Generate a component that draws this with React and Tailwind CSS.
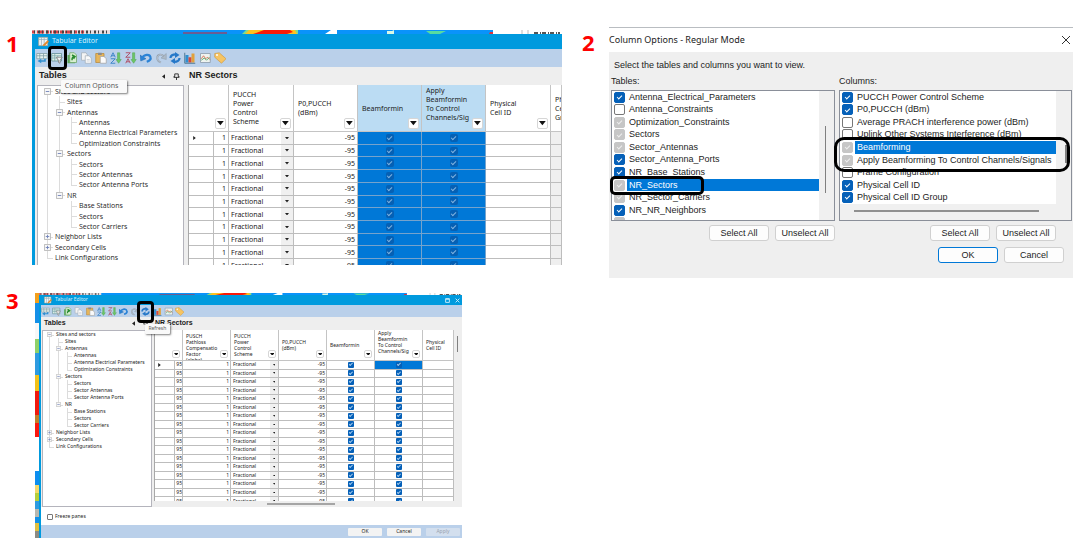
import React, { useState } from "react";

const tree = [
  { label: "Sites and sectors", depth: 0, box: "-", first: true },
  { label: "Sites", depth: 1 },
  { label: "Antennas", depth: 1, box: "-" },
  { label: "Antennas", depth: 2 },
  { label: "Antenna Electrical Parameters", depth: 2 },
  { label: "Optimization Constraints", depth: 2, last: true },
  { label: "Sectors", depth: 1, box: "-" },
  { label: "Sectors", depth: 2 },
  { label: "Sector Antennas", depth: 2 },
  { label: "Sector Antenna Ports", depth: 2, last: true },
  { label: "NR", depth: 1, box: "-", last: true },
  { label: "Base Stations", depth: 2, closed: true },
  { label: "Sectors", depth: 2, closed: true },
  { label: "Sector Carriers", depth: 2, closed: true, last: true },
  { label: "Neighbor Lists", depth: 0, box: "+" },
  { label: "Secondary Cells", depth: 0, box: "+" },
  { label: "Link Configurations", depth: 0, last: true },
];

const tableOptions = [
  { label: "Antenna_Electrical_Parameters", state: "on" },
  { label: "Antenna_Constraints", state: "off" },
  { label: "Optimization_Constraints", state: "mixed" },
  { label: "Sectors", state: "mixed" },
  { label: "Sector_Antennas", state: "mixed" },
  { label: "Sector_Antenna_Ports", state: "on" },
  { label: "NR_Base_Stations", state: "on" },
  { label: "NR_Sectors", state: "mixed", selected: true },
  { label: "NR_Sector_Carriers", state: "mixed" },
  { label: "NR_NR_Neighbors", state: "on" },
  { label: "", state: "mixed" },
];

const columnOptions = [
  { label: "PUCCH Power Control Scheme", state: "on" },
  { label: "P0,PUCCH (dBm)", state: "on" },
  { label: "Average PRACH interference power (dBm)", state: "off" },
  { label: "Uplink Other Systems Interference (dBm)", state: "off" },
  { label: "Beamforming", state: "mixed", selected: true },
  { label: "Apply Beamforming To Control Channels/Signals", state: "mixed" },
  { label: "Frame Configuration", state: "off" },
  { label: "Physical Cell ID", state: "on" },
  { label: "Physical Cell ID Group", state: "on" },
];

const large = {
  border: "border-l-[3px]",
  title: "h-[15px] gap-[3px] pl-[3px] text-[7px]",
  titleIcon: "size-[11px]",
  toolbar: "h-[18px]",
  icons: "ml-px w-[190px]",
  icon: "size-3",
  aside: "w-[149px] pl-0.5",
  heading: "h-[18px] text-[9px]",
  tree: "h-[177px] pl-[3px] font-['Open_Sans'] text-[7px]",
  guide: "w-3",
  guideLine: "left-[6px]",
  box: "size-[7px]",
  main: "ml-1",
  table: "h-[187px] text-[7px]",
  header: "h-[47px] leading-[9px]",
  lines: "pl-1",
  filter: "size-[11px]",
  check: "size-[8px] rounded-[2px]",
  arrow: "w-3",
};

const small = {
  border: "border-l-2",
  title: "h-[10px] gap-[3px] pl-[3px] text-[5px]",
  titleIcon: "size-[8px]",
  toolbar: "h-3",
  icons: "w-[143px]",
  icon: "size-[9px]",
  aside: "w-[111px] pl-px",
  heading: "h-[13px] text-[7px]",
  tree: "h-[119px] pl-0.5 text-[5px]",
  guide: "w-[9px]",
  guideLine: "left-[4px]",
  box: "size-[5px]",
  main: "ml-0.5",
  table: "h-[176px] text-[5px]",
  header: "h-[31px] leading-[6px]",
  lines: "pl-[3px]",
  filter: "size-[8px]",
  check: "size-[6px] rounded-[1px]",
  arrow: "w-[8px]",
};

function Icon({ className, children }) {
  return (
    <svg viewBox="0 0 16 16" className={className} aria-hidden="true">
      {children}
    </svg>
  );
}

const tools = [
  {
    name: "Table",
    art: (
      <>
        <path d="M1 2h14v7H1z" fill="#e8f1ee" stroke="#7d9ba1" />
        <path d="M1 5h14M5 2v7M10 2v7" stroke="#7d9ba1" fill="none" />
        <path d="M13 9v4H7v2l-5-3 5-3v2h4V9z" fill="#2f8fd0" />
      </>
    ),
  },
  {
    name: "Column Options",
    art: (
      <>
        <path d="M1 2h13v10H1z" fill="#dff0e8" stroke="#5c8992" />
        <path d="M1 5h13M5 2v10M9 5v7M1 8h8" stroke="#78a7ac" fill="none" />
        <path d="M7 7h8l-3 4v4l-2-1v-3z" fill="#f5f5f5" stroke="#777" />
      </>
    ),
  },
  {
    name: "Export",
    art: (
      <>
        <path d="M2 4h10v11H2z" fill="#5aa85a" />
        <path d="M5 1h6l3 3v10H5z" fill="#d9efd2" stroke="#6aa465" />
        <path d="M8 11c0-4 1-5 3-5M8 4l4 2-2 3" stroke="#278a30" strokeWidth="2" fill="none" />
      </>
    ),
  },
  {
    name: "Copy",
    art: (
      <>
        <path d="M2 1h6l2 3v7H2z" fill="#f4f4f4" stroke="#a3adb8" />
        <path d="M7 5h5l3 3v7H7z" fill="#fafafa" stroke="#a3adb8" />
        <path d="M9 10h4M9 12h4" stroke="#c3cad2" />
      </>
    ),
  },
  {
    name: "Paste",
    art: (
      <>
        <path d="M1 2h11v12H1z" fill="#e7b65b" stroke="#b98a3a" />
        <path d="M4 1h5v3H4z" fill="#8b8b8b" />
        <path d="M7 6h5l3 3v6H7z" fill="#fbfbfb" stroke="#a3a3a3" />
      </>
    ),
  },
  {
    name: "Sort ascending",
    art: (
      <>
        <path d="M1 7l3-6 3 6M2 5h4" stroke="#3f86c8" strokeWidth="1.3" fill="none" />
        <path d="M1 9h6l-6 6h6" stroke="#3f86c8" strokeWidth="1.3" fill="none" />
        <path d="M10 1h3v9h2l-3.5 5L8 10h2z" fill="#6cc566" stroke="#4aa04d" strokeWidth=".6" />
      </>
    ),
  },
  {
    name: "Sort descending",
    art: (
      <>
        <path d="M1 1h6L1 7h6" stroke="#b0526a" strokeWidth="1.3" fill="none" />
        <path d="M1 15l3-6 3 6M2 13h4" stroke="#b0526a" strokeWidth="1.3" fill="none" />
        <path d="M10 1h3v9h2l-3.5 5L8 10h2z" fill="#6cc566" stroke="#4aa04d" strokeWidth=".6" />
      </>
    ),
  },
  {
    name: "Undo",
    art: (
      <>
        <path d="M0 4l1 8 7-3z" fill="#2b83d6" stroke="#1c62a8" strokeWidth=".6" />
        <path d="M3 8c2-5 10-6 11-1 1 3-2 5-5 6" fill="none" stroke="#2b83d6" strokeWidth="3" />
      </>
    ),
  },
  {
    name: "Redo",
    art: (
      <>
        <path d="M15 2v8l-7-2z" fill="#aebac6" stroke="#8794a3" strokeWidth=".6" />
        <path d="M12 6C9 2 3 3 3 8c0 3 2 5 5 6" fill="none" stroke="#8f9dac" strokeWidth="2.4" />
        <path d="M12 6C9 2 3 3 3 8c0 3 2 5 5 6" fill="none" stroke="#c5ced8" strokeWidth="1" />
      </>
    ),
  },
  {
    name: "Refresh",
    art: (
      <>
        <path d="M2 8c0-3 3-5 7-5" fill="none" stroke="#2678c8" strokeWidth="3" />
        <path d="M8 0l6 4-6 4z" fill="#2678c8" />
        <path d="M14 8c0 3-3 5-7 5" fill="none" stroke="#2678c8" strokeWidth="3" />
        <path d="M8 8v8l-6-4z" fill="#2678c8" />
      </>
    ),
  },
  {
    name: "Chart",
    art: (
      <>
        <path d="M2 4h4v10H2z" fill="#2f8fd0" />
        <path d="M6 7h4v7H6z" fill="#d8483a" />
        <path d="M10 2h4v12h-4z" fill="#e2a13a" />
        <path d="M1 1v14h14" stroke="#2b5d78" fill="none" />
      </>
    ),
  },
  {
    name: "Graph",
    art: (
      <>
        <path d="M2 2h13v12H2z" fill="#eef3f0" stroke="#8795a5" />
        <path d="M3 9l3-4 3 4 2-2 4 3" stroke="#d0562f" fill="none" />
        <path d="M3 11l4-3 3 3 4-4" stroke="#3c9a52" fill="none" />
      </>
    ),
  },
  {
    name: "Label",
    art: (
      <>
        <path d="M1 2l6-1 9 8-6 6-9-8z" fill="#f6c463" stroke="#cf9536" strokeWidth=".8" />
        <circle cx="4" cy="4" r="1.3" fill="#fff" />
      </>
    ),
  },
];

function Tick({ label, className, checked = true }) {
  return (
    <input
      type="checkbox"
      defaultChecked={checked}
      aria-label={label}
      className={`relative block shrink-0 appearance-none after:absolute after:left-[20%] after:top-[25%] after:h-[35%] after:w-[60%] after:-rotate-45 after:border-b after:border-l ${className}`}
    />
  );
}

function TreeRow({ node, s }) {
  const guides = [];
  if (node.depth > 0) guides.push(true);
  if (node.depth > 1) guides.push(!node.closed);
  return (
    <li className="flex items-stretch">
      {guides.map((shown, i) => (
        <span key={i} className={`relative shrink-0 ${s.guide}`}>
          {shown && (
            <span className={`absolute inset-y-0 border-l border-[#dcdcdc] ${s.guideLine}`} />
          )}
        </span>
      ))}
      <span className={`relative flex shrink-0 items-center justify-center ${s.guide}`}>
        <span
          className={`absolute border-l border-[#dcdcdc] ${s.guideLine} ${
            node.first ? "top-1/2" : "top-0"
          } ${node.last ? "bottom-1/2" : "bottom-0"}`}
        />
        <span className={`absolute right-0 top-1/2 border-t border-[#dcdcdc] ${s.guideLine}`} />
        {node.box && (
          <Icon className={`relative ${s.box}`}>
            <path d="M1 1h14v14H1z" fill="#f7f7f7" stroke="#b5b5b5" strokeWidth="2" />
            <path d="M4 8h8" stroke="#6e80b8" strokeWidth="2" />
            {node.box === "+" && <path d="M8 4v8" stroke="#6e80b8" strokeWidth="2" />}
          </Icon>
        )}
      </span>
      <span className="flex items-center whitespace-nowrap pl-0.5 leading-none">{node.label}</span>
    </li>
  );
}

function HeaderCell({ s, lines, filter = true, tint = "", clip = "", span }) {
  return (
    <th
      colSpan={span}
      className={`relative overflow-hidden border-b border-r border-[#c4c4c4] p-0 text-left align-middle font-normal ${s.header} ${tint}`}
    >
      <span className={`block whitespace-nowrap ${s.lines} ${clip}`}>
        {lines.map((line, i) => (
          <span key={i} className="block">
            {line || "\u00a0"}
          </span>
        ))}
      </span>
      {filter && (
        <button
          type="button"
          aria-label={`Filter ${lines.join(" ")}`}
          className={`absolute bottom-0.5 right-0.5 flex items-center justify-center rounded-[2px] border border-[#d6d6d6] bg-white ${s.filter}`}
        >
          <svg viewBox="0 0 8 5" className="w-3/4" aria-hidden="true">
            <path d="M0 0h8L4 5z" fill="#111" />
          </svg>
        </button>
      )}
    </th>
  );
}

function SchemeCell({ s, row }) {
  return (
    <td className="border-b border-r border-[#bdbdbd] p-0">
      <div className="flex h-full items-stretch">
        <select
          aria-label={`PUCCH power control scheme, row ${row}`}
          className="min-w-0 flex-1 appearance-none bg-transparent pl-0.5 leading-none"
        >
          <option>Fractional</option>
        </select>
        <span className={`flex items-center justify-center bg-[#f0f0f0] ${s.arrow}`}>
          <svg viewBox="0 0 8 5" className="w-1/3" aria-hidden="true">
            <path d="M0 0h8L4 5z" fill="#222" />
          </svg>
        </span>
      </div>
    </td>
  );
}

const cell = "border-b border-r border-[#bdbdbd] p-0 leading-none";

function LargeGrid() {
  const s = large;
  const rows = Array.from({ length: 11 }, (_, i) => i + 1);
  return (
    <table className={`w-full table-fixed border-separate border-spacing-0 border-l border-[#a8a8a8] bg-white ${s.table}`}>
      <colgroup>
        <col className="w-[25px]" />
        <col className="w-[15px]" />
        <col className="w-[65px]" />
        <col className="w-[64px]" />
        <col className="w-[64px]" />
        <col className="w-[64px]" />
        <col className="w-[65px]" />
        <col />
      </colgroup>
      <thead>
        <tr>
          <HeaderCell s={s} lines={[]} span={2} />
          <HeaderCell s={s} lines={["PUCCH", "Power", "Control", "Scheme"]} />
          <HeaderCell s={s} lines={["P0,PUCCH", "(dBm)"]} />
          <HeaderCell s={s} lines={["Beamformin"]} tint="bg-[#bbdcf3]" />
          <HeaderCell
            s={s}
            lines={["Apply", "Beamformin", "To Control", "Channels/Sig", ""]}
            tint="bg-[#bbdcf3]"
          />
          <HeaderCell s={s} lines={["Physical", "Cell ID"]} />
          <HeaderCell s={s} lines={["Physical", "Cell ID", "Group"]} filter={false} />
        </tr>
      </thead>
      <tbody>
        {rows.map((row) => (
          <tr key={row}>
            <td className={`${cell} pl-1`}>{row === 1 ? <Pointer /> : null}</td>
            <td className={`${cell} pr-0.5 text-right`}>1</td>
            <SchemeCell s={s} row={row} />
            <td className={`${cell} pr-0.5 text-right`}>-95</td>
            {["Beamforming", "Apply beamforming"].map((name) => (
              <td key={name} className="border-b border-r border-[#75a3cc] bg-[#0078d7] p-0">
                <Tick
                  label={`${name}, row ${row}`}
                  className={`mx-auto bg-[#0560b4] after:border-[#7fb2e0] ${s.check}`}
                />
              </td>
            ))}
            <td className={cell} />
            <td className={`${cell} bg-[#efefef]`} />
          </tr>
        ))}
      </tbody>
    </table>
  );
}

function SmallGrid() {
  const s = small;
  const rows = Array.from({ length: 17 }, (_, i) => i + 1);
  return (
    <table className={`w-full table-fixed border-separate border-spacing-0 border-l border-[#a8a8a8] bg-white ${s.table}`}>
      <colgroup>
        <col className="w-5" />
        <col className="w-[8px]" />
        <col className="w-12" />
        <col className="w-12" />
        <col className="w-12" />
        <col className="w-12" />
        <col className="w-12" />
        <col />
      </colgroup>
      <thead>
        <tr>
          <HeaderCell s={s} lines={[]} span={2} />
          <HeaderCell
            s={s}
            lines={["PUSCH", "Pathloss", "Compensatio", "Factor", "(alpha)"]}
            clip="max-h-6"
          />
          <HeaderCell s={s} lines={["PUCCH", "Power", "Control", "Scheme"]} />
          <HeaderCell s={s} lines={["P0,PUCCH", "(dBm)"]} />
          <HeaderCell s={s} lines={["Beamformin"]} />
          <HeaderCell s={s} lines={["Apply", "Beamformin", "To Control", "Channels/Sig", ""]} />
          <HeaderCell s={s} lines={["Physical", "Cell ID"]} filter={false} />
        </tr>
      </thead>
      <tbody>
        {rows.map((row) => (
          <tr key={row}>
            <td className={`${cell} pl-[3px]`}>{row === 1 ? <Pointer /> : null}</td>
            <td className={`${cell} text-right`}>95</td>
            <td className={`${cell} pr-px text-right`}>1</td>
            <SchemeCell s={s} row={row} />
            <td className={`${cell} pr-px text-right`}>-95</td>
            <td className={cell}>
              <Tick
                label={`Beamforming, row ${row}`}
                className={`mx-auto bg-[#0560b8] after:border-[#9cc4ea] ${s.check}`}
              />
            </td>
            <td className={`${cell} ${row === 1 ? "bg-[#0078d7]" : ""}`}>
              <Tick
                label={`Apply beamforming, row ${row}`}
                className={`mx-auto bg-[#0560b8] after:border-[#9cc4ea] ${s.check}`}
              />
            </td>
            <td className={cell} />
          </tr>
        ))}
      </tbody>
    </table>
  );
}

function Pointer() {
  return (
    <svg viewBox="0 0 4 6" className="h-1 w-[3px]" aria-hidden="true">
      <path d="M0 0l4 3-4 3z" fill="#222" />
    </svg>
  );
}

function EditorWindow({ s, controls, grid, footer, activeTool, tip }) {
  return (
    <div className={`flex flex-1 flex-col border-[#009ade] bg-white text-[#1c1c1c] ${s.border}`}>
      <div className={`flex shrink-0 items-center bg-[#009ade] text-[#d9f0fb] ${s.title}`}>
        <Icon className={s.titleIcon}>
          <path d="M1 2h13v12H1z" fill="#eef4f6" stroke="#b5a48a" />
          <path d="M1 5h13M5 2v12M9 2v12" stroke="#8fa8b4" />
          <path d="M14 6l2 2-6 6-3 1 1-3z" fill="#e38a2e" />
        </Icon>
        <span className="flex-1">Tabular Editor</span>
        {controls && (
          <span className="flex gap-[5px] pr-0.5">
            <button type="button" aria-label="Maximize">
              <svg viewBox="0 0 8 8" className="size-[5px]">
                <path d="M1 1h6v6H1zM1 2h6" fill="none" stroke="#c9ecfb" strokeWidth="1.500" />
              </svg>
            </button>
            <button type="button" aria-label="Close">
              <svg viewBox="0 0 8 8" className="size-[5px]">
                <path d="M1 1l6 6M7 1L1 7" stroke="#c9ecfb" strokeWidth="1.500" />
              </svg>
            </button>
          </span>
        )}
      </div>
      <div className={`flex shrink-0 items-center bg-[#bad0ea] ${s.toolbar}`}>
        <div className={`flex justify-between ${s.icons}`}>
          {tools.map((tool) => (
            <button key={tool.name} type="button" aria-label={tool.name} className="relative">
              <Icon className={s.icon}>{tool.art}</Icon>
              {tool.name === activeTool && tip}
            </button>
          ))}
        </div>
      </div>
      <div className="flex min-h-0 flex-1 bg-[#eeeeee]">
        <aside className={`flex shrink-0 flex-col ${s.aside}`}>
          <div className={`flex shrink-0 items-center gap-2 pl-0.5 pr-1 font-['Liberation_Sans'] font-bold ${s.heading}`}>
            <h2 className="flex-1">Tables</h2>
            <svg viewBox="0 0 4 6" className="h-[5px] w-[3px]" aria-hidden="true">
              <path d="M4 0L0 3l4 3z" fill="#222" />
            </svg>
            <svg viewBox="0 0 8 8" className={s.box} aria-hidden="true">
              <path d="M2 1h4v3h1v1H1V4h1zM4 5v3" fill="none" stroke="#222" />
            </svg>
          </div>
          <div className="min-h-0 flex-1 overflow-hidden border border-[#b4b4bc] bg-white">
            <ul className={`grid auto-rows-fr ${s.tree}`}>
              {tree.map((node, i) => (
                <TreeRow key={i} node={node} s={s} />
              ))}
            </ul>
          </div>
        </aside>
        <main className={`flex min-w-0 flex-1 flex-col ${s.main}`}>
          <h2 className={`flex shrink-0 items-center pl-px font-['Liberation_Sans'] font-bold ${s.heading}`}>
            NR Sectors
          </h2>
          {grid}
        </main>
      </div>
      {footer}
    </div>
  );
}

function ToolMark({ className, tip, tipClass }) {
  return (
    <>
      <span className={`absolute z-10 border-black ${className}`} />
      <span
        role="tooltip"
        className={`absolute flex items-center whitespace-nowrap rounded-[1px] bg-[#f9f9f9] text-[#5e5e5e] shadow-[1px_1px_2px_rgba(0,0,0,0.5)] ${tipClass}`}
      >
        {tip}
      </span>
    </>
  );
}

function MapTop({ className }) {
  return (
    <svg viewBox="0 0 530 4" preserveAspectRatio="none" className={`w-full shrink-0 ${className}`} aria-hidden="true">
      <path d="M0 0h530v4H0z" fill="#0a93fa" />
      <path d="M0 0h78v4H0z" fill="#e6dde0" />
      <path d="M0 2h52" stroke="#d8434a" strokeWidth="3" strokeDasharray="3 2 1 1 5 2" />
      <path d="M2 2h76" stroke="#444" strokeWidth="3" strokeDasharray="1 3 2 2" />
      <path d="M151 3h44" stroke="#8d4a70" strokeWidth="1.5" />
      <path d="M210 4l4-4h52v4z" fill="#7fdc8c" />
      <path d="M213 4l4-4h46l2 4z" fill="#ffc21f" />
      <path d="M232 0h26l3 2-6 2h-34z" fill="#fb1a08" />
      <path d="M293 4l6-4h6v4z" fill="#fff" />
      <path d="M355 4V1h5l2-1v4z" fill="#d9f7e6" />
      <path d="M394 1h20l-6 3h-10z" fill="#58dba0" />
      <path d="M458 2h3v2h-4z" fill="#e0303a" />
      <path d="M461 0h69v4h-69z" fill="#fff" />
      <path d="M490 0v4M496 0v4" stroke="#bbb" />
      <path d="M502 3h26" stroke="#555" strokeWidth="2" strokeDasharray="4 2 1 1" />
    </svg>
  );
}

function MapSide() {
  const bands = [
    [0, 10, "#f4a01c"],
    [10, 20, "#1590e8"],
    [30, 16, "#f7f7f7"],
    [46, 14, "#8fd16a"],
    [60, 22, "#2f9be0"],
    [82, 16, "#f2c21b"],
    [98, 24, "#f01c10"],
    [122, 8, "#c2802a"],
    [130, 14, "#fa1a10"],
    [144, 34, "#fff"],
    [178, 14, "#0d8ef0"],
    [192, 8, "#f3d96a"],
    [200, 8, "#b5cf3c"],
    [208, 8, "#2f9be0"],
    [216, 8, "#b8b8b0"],
    [224, 6, "#1590e8"],
    [230, 8, "#e0c040"],
    [238, 7, "#8c8c84"],
  ];
  return (
    <svg viewBox="0 0 4 245" preserveAspectRatio="none" className="w-1 shrink-0" aria-hidden="true">
      {bands.map(([y, h, fill]) => (
        <rect key={y} x="0" y={y} width="4" height={h} fill={fill} />
      ))}
    </svg>
  );
}

const optionTone = {
  on: "border border-[#0560b8] bg-[#0560b8] after:border-white",
  off: "border border-[#777] bg-white after:hidden",
  mixed: "border border-[#c6c6c6] bg-[#c6c6c6] after:border-[#eee]",
};

function OptionList({ items }) {
  return (
    <ul className="grid h-full auto-rows-fr">
      {items.map((item, i) => (
        <li key={i} className="flex min-h-0 items-center gap-0.5 pl-0.5">
          <Tick
            label={item.label || "More tables"}
            checked={item.state !== "off"}
            className={`size-[11px] rounded-[2px] ${optionTone[item.state]}`}
          />
          <span
            className={`flex h-full flex-1 items-center whitespace-nowrap pl-0.5 leading-none ${
              item.selected ? "bg-[#0078d7] text-white" : ""
            }`}
          >
            {item.label}
          </span>
        </li>
      ))}
    </ul>
  );
}

function DialogButton({ children, primary }) {
  return (
    <button
      type="button"
      className={`h-4 w-[60px] rounded-[3px] border bg-[#fdfdfd] leading-none ${
        primary ? "border-[#0078d7]" : "border-[#d0d0d0]"
      }`}
    >
      {children}
    </button>
  );
}

function ColumnOptions() {
  return (
    <section className="relative flex h-[251px] min-w-0 flex-1 flex-col border-t border-[#b9bdc1] bg-[#efefef] font-['Liberation_Sans'] text-[9px] text-[#1c1c1c]">
      <div className="flex h-6 shrink-0 items-center justify-between bg-white font-['Noto_Sans']">
        <h2>Column Options - Regular Mode</h2>
        <button type="button" aria-label="Close" className="pr-0.5">
          <svg viewBox="0 0 10 10" className="size-[10px]">
            <path d="M1 1l8 8M9 1L1 9" stroke="#333" />
          </svg>
        </button>
      </div>
      <p className="pl-[5px] pt-2 leading-[10px]">Select the tables and columns you want to view.</p>
      <div className="grid grid-cols-[224px_1fr] gap-x-1 pl-0.5 pr-px pt-[5px]">
        <div>
          <h3 className="h-[15px] leading-3">Tables:</h3>
          <div className="relative flex h-[131px] overflow-hidden border border-[#8a8f99] bg-white">
            <div className="h-[138px] flex-1">
              <OptionList items={tableOptions} />
            </div>
            <div className="w-[15px] bg-[#f0f0f0]">
              <div className="ml-1.5 mt-[35px] h-[67px] w-px bg-[#808080]" />
            </div>
          </div>
          <div className="mt-1 flex justify-end gap-1.5">
            <DialogButton>Select All</DialogButton>
            <DialogButton>Unselect All</DialogButton>
          </div>
        </div>
        <div className="min-w-0">
          <h3 className="h-[15px] leading-3">Columns:</h3>
          <div className="relative h-[131px] border border-[#8a8f99] bg-[#f0f0f0]">
            <div className="mr-[15px] h-[113px] bg-white">
              <OptionList items={columnOptions} />
            </div>
            <div className="ml-[14px] mt-1.5 h-0.5 w-[185px] bg-[#909090]" />
            <div className="absolute right-1 top-[54px] h-[18px] w-0.5 bg-[#808080]" />
            <span className="absolute -left-[6px] top-[46px] h-[35px] w-[236px] rounded-[10px] border-[3px] border-black" />
          </div>
          <div className="mt-1 flex justify-end gap-1.5 pr-4">
            <DialogButton>Select All</DialogButton>
            <DialogButton>Unselect All</DialogButton>
          </div>
          <div className="mt-1.5 flex justify-end gap-1.5 pr-2">
            <DialogButton primary>OK</DialogButton>
            <DialogButton>Cancel</DialogButton>
          </div>
        </div>
      </div>
      <span className="absolute left-px top-[148px] h-[19px] w-[94px] rounded-[5px] border-[3px] border-black" />
    </section>
  );
}

function Step({ children }) {
  return (
    <span className="font-['Open_Sans'] text-[22px] font-bold leading-none text-[#fe0000]">
      {children}
    </span>
  );
}

function FreezeFooter() {
  const [freeze, setFreeze] = useState(false);
  return (
    <>
      <div className="flex h-[18px] shrink-0 items-center pl-1.5 pt-px text-[5px]">
        <label className="flex items-center gap-0.5">
          <input
            type="checkbox"
            checked={freeze}
            onChange={(e) => setFreeze(e.target.checked)}
            className="size-[6px] appearance-none rounded-[1px] border border-[#777] bg-white checked:bg-[#0560b8]"
          />
          Freeze panes
        </label>
      </div>
      <div className="flex h-[13px] shrink-0 items-center justify-end gap-[5px] bg-[#bad0ea] pr-0.5 text-[5px] leading-none">
        <button type="button" className="h-[8px] w-[34px] rounded-[1px] bg-[#f3f3f3]">
          OK
        </button>
        <button type="button" className="h-[8px] w-[34px] rounded-[1px] bg-[#f3f3f3]">
          Cancel
        </button>
        <button type="button" disabled className="h-[8px] w-[34px] rounded-[1px] bg-[#d3dfee] text-[#9aa3ae]">
          Apply
        </button>
      </div>
    </>
  );
}

export default function App() {
  return (
    <div className="grid min-h-screen grid-cols-[562fr_518fr] items-start overflow-hidden bg-white font-['Noto_Sans',sans-serif]">
      <div className="min-w-0">
        <div className="flex pt-[30px]">
          <div className="w-8 shrink-0 pl-1.5 pt-0.5">
            <Step>1</Step>
          </div>
          <section className="flex h-[235px] min-w-0 flex-1 flex-col overflow-hidden">
            <MapTop className="h-1" />
            <EditorWindow
              s={large}
              grid={<LargeGrid />}
              activeTool="Column Options"
              tip={
                <ToolMark
                  className="-left-[3px] -top-[6px] h-6 w-[19px] rounded-[4px] border-[3px]"
                  tip="Column Options"
                  tipClass="left-2.5 top-7 h-[13px] w-[66px] pl-1 text-[7px]"
                />
              }
            />
          </section>
        </div>
        <div className="flex pt-6">
          <div className="w-[35px] shrink-0 pl-1.5">
            <Step>3</Step>
          </div>
          <section className="mt-1 flex h-[245px] w-[427px] overflow-hidden">
            <MapSide />
            <div className="flex min-w-0 flex-1 flex-col">
              <MapTop className="h-0.5" />
              <EditorWindow
                s={small}
                controls
                grid={
                  <div className="flex min-h-0 flex-1">
                    <div className="min-w-0 flex-1">
                      <div className="h-[171px] overflow-hidden bg-white">
                        <SmallGrid />
                      </div>
                      <div className="ml-[113px] mt-0.5 h-0.5 w-[68px] bg-[#a5a5a5]" />
                    </div>
                    <div className="w-[8px] pt-1.5">
                      <div className="ml-[3px] h-4 w-px bg-[#808080]" />
                    </div>
                  </div>
                }
                footer={<FreezeFooter />}
                activeTool="Refresh"
                tip={
                  <ToolMark
                    className="-left-[4px] -top-[6px] h-[22px] w-[17px] rounded-[4px] border-[3px]"
                    tip="Refresh"
                    tipClass="left-1 top-[17px] h-[10px] w-[25px] pl-[3px] text-[5px]"
                  />
                }
              />
            </div>
          </section>
        </div>
      </div>
      <div className="flex min-w-0 pr-[7px] pt-[27px]">
        <div className="w-[47px] shrink-0 pl-5 pt-1">
          <Step>2</Step>
        </div>
        <ColumnOptions />
      </div>
    </div>
  );
}
